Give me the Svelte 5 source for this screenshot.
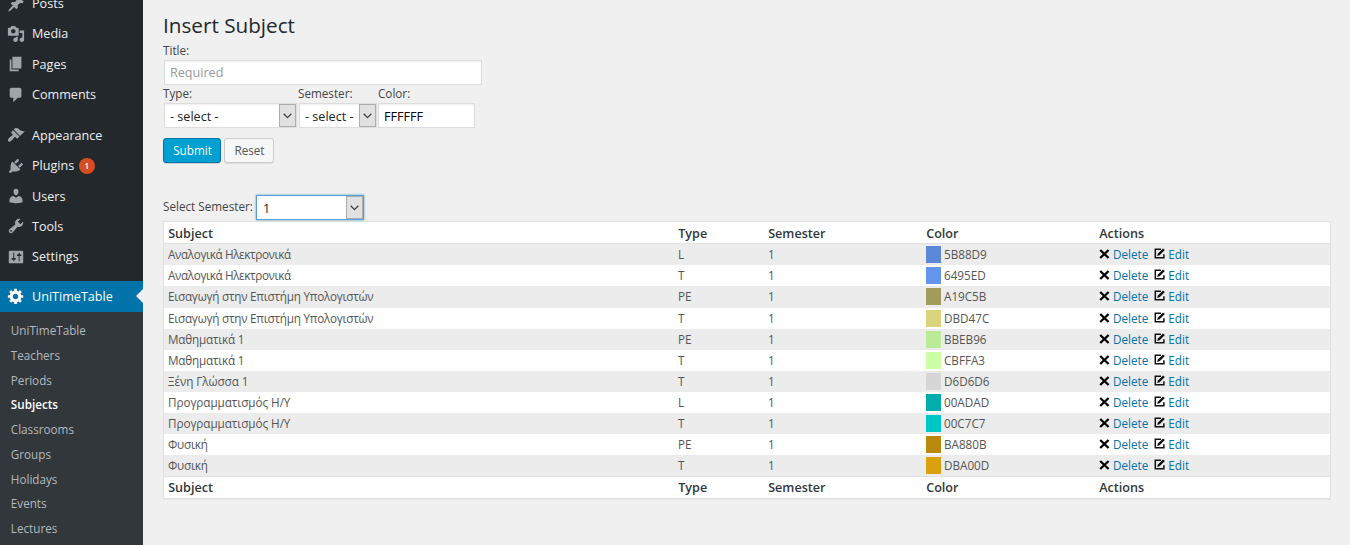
<script>
  const icons = {
    post: 'M10.44 3.02l1.82-1.82 6.36 6.35-1.83 1.82c-1.05-.68-2.48-.57-3.41.36l-.75.75c-.92.93-1.04 2.35-.35 3.41l-1.83 1.82-2.41-2.41-2.8 2.79c-.42.42-3.38 2.71-3.8 2.29s1.86-3.39 2.28-3.81l2.79-2.79L4.1 9.36l1.83-1.82c1.05.69 2.48.57 3.4-.36l.75-.75c.93-.92 1.05-2.35.36-3.41z',
    media: 'M13 11V4c0-.55-.45-1-1-1h-1.67L9 1H5L3.67 3H2c-.55 0-1 .45-1 1v7c0 .55.45 1 1 1h10c.55 0 1-.45 1-1zM7 4.5c1.38 0 2.5 1.12 2.5 2.5S8.38 9.5 7 9.5 4.5 8.38 4.5 7 5.62 4.5 7 4.5zM14 6h5v10.5c0 1.38-1.12 2.5-2.5 2.5S14 17.88 14 16.5s1.12-2.5 2.5-2.5c.17 0 .34.02.5.05V9h-3V6zm-4 8.05V13h2v3.5c0 1.38-1.12 2.5-2.5 2.5S7 17.88 7 16.5 8.12 14 9.5 14c.17 0 .34.02.5.05z',
    page: 'M6 15V2h10v13H6zm-1 1h8v2H3V5h2v11z',
    comment: 'M5 2h9c1.1 0 2 .9 2 2v7c0 1.1-.9 2-2 2h-2l-5 5v-5H5c-1.1 0-2-.9-2-2V4c0-1.1.9-2 2-2z',
    brush: 'M14.48 11.06L7.41 3.99l1.5-1.5c.5-.56 2.3-.47 3.51.32 1.21.8 1.43 1.28 2.91 2.1 1.18.64 2.45 1.26 4.45.85zm-.71.71L6.7 4.7 4.93 6.47c-.39.39-.39 1.02 0 1.41l1.06 1.06c.39.39.39 1.03 0 1.42-.6.6-1.43 1.11-2.21 1.69-.35.26-.7.53-1.01.84C1.43 14.23.4 16.08 1.4 17.07c.99 1 2.84-.03 4.18-1.36.31-.31.58-.66.85-1.02.57-.78 1.08-1.61 1.69-2.21.39-.39 1.02-.39 1.41 0l1.06 1.06c.39.39 1.02.39 1.41 0z',
    plug: 'M13.11 4.36L9.87 7.6 8 5.73l3.24-3.24c.35-.34 1.05-.2 1.56.32.52.51.66 1.21.31 1.55zm-8 1.77l.91-1.12 9.01 9.01-1.19.84c-.71.71-2.63 1.16-3.82 1.16H6.14L4.9 17.26c-.59.59-1.54.59-2.12 0-.59-.58-.59-1.53 0-2.12l1.24-1.24v-3.88c0-1.13.4-3.19 1.09-3.89zm7.26 3.97l3.24-3.24c.34-.35 1.04-.21 1.55.31.52.51.66 1.21.31 1.55l-3.24 3.25z',
    user: 'M10 9.25c-2.27 0-2.73-3.44-2.73-3.44C7 4.02 7.82 2 9.97 2c2.16 0 2.98 2.02 2.71 3.81 0 0-.41 3.44-2.68 3.44zm0 2.57L12.72 10c2.39 0 4.52 2.33 4.52 4.53v2.49s-3.65 1.13-7.24 1.13c-3.65 0-7.24-1.13-7.24-1.13v-2.49c0-2.25 1.94-4.48 4.47-4.48z',
    wrench: 'M16.68 9.77c-1.34 1.34-3.3 1.67-4.95.99l-5.41 6.52c-.99.99-2.59.99-3.58 0s-.99-2.59 0-3.57l6.52-5.42c-.68-1.65-.35-3.61.99-4.95 1.28-1.28 3.12-1.62 4.72-1.06l-2.89 2.89 2.82 2.82 2.86-2.87c.53 1.58.18 3.39-1.08 4.65zM3.81 16.21c.4.39 1.04.39 1.43 0 .4-.4.4-1.04 0-1.43-.39-.4-1.03-.4-1.43 0-.39.39-.39 1.03 0 1.43z',
    sliders: 'M18 16V4c0-.55-.45-1-1-1H3c-.55 0-1 .45-1 1v12c0 .55.45 1 1 1h14c.55 0 1-.45 1-1zM8 11h1c.55 0 1 .45 1 1s-.45 1-1 1H8v1.5c0 .28-.22.5-.5.5s-.5-.22-.5-.5V13H6c-.55 0-1-.45-1-1s.45-1 1-1h1V5.5c0-.28.22-.5.5-.5s.5.22.5.5V11zm5-2h-1c-.55 0-1-.45-1-1s.45-1 1-1h1V5.5c0-.28.22-.5.5-.5s.5.22.5.5V7h1c.55 0 1 .45 1 1s-.45 1-1 1h-1v5.5c0 .28-.22.5-.5.5s-.5-.22-.5-.5V9z',
    gear: 'M18 12h-2.18c-.17.7-.44 1.35-.81 1.93l1.54 1.54-2.1 2.1-1.54-1.54c-.58.36-1.23.63-1.91.79V19H8v-2.18c-.68-.16-1.33-.43-1.91-.79l-1.54 1.54-2.12-2.12 1.54-1.54c-.36-.58-.63-1.23-.79-1.91H1V9.03h2.17c.16-.7.44-1.35.8-1.94L2.43 5.55l2.1-2.1 1.54 1.54c.58-.37 1.24-.64 1.93-.81V2h3v2.18c.68.16 1.33.43 1.91.79l1.54-1.54 2.12 2.12-1.54 1.54c.36.59.64 1.24.8 1.94H18V12zm-8.5 1.5c1.66 0 3-1.34 3-3s-1.34-3-3-3-3 1.34-3 3 1.34 3 3 3z'
  };
  const groups = [
    [['Posts', 'post'], ['Media', 'media'], ['Pages', 'page'], ['Comments', 'comment']],
    [['Appearance', 'brush'], ['Plugins', 'plug', 1], ['Users', 'user'], ['Tools', 'wrench'], ['Settings', 'sliders']]
  ];
  const submenu = ['UniTimeTable', 'Teachers', 'Periods', 'Subjects', 'Classrooms', 'Groups', 'Holidays', 'Events', 'Lectures'];
  const heads = ['Subject', 'Type', 'Semester', 'Color', 'Actions'];
  // subject, type, colour, tracking of the subject in px
  const rows = [
    ['Αναλογικά Ηλεκτρονικά', 'L', '5B88D9', -0.35],
    ['Αναλογικά Ηλεκτρονικά', 'T', '6495ED', -0.35],
    ['Εισαγωγή στην Επιστήμη Υπολογιστών', 'PE', 'A19C5B', -0.22],
    ['Εισαγωγή στην Επιστήμη Υπολογιστών', 'T', 'DBD47C', -0.22],
    ['Μαθηματικά 1', 'PE', 'BBEB96', -0.2],
    ['Μαθηματικά 1', 'T', 'CBFFA3', -0.2],
    ['Ξένη Γλώσσα 1', 'T', 'D6D6D6', -0.05],
    ['Προγραμματισμός Η/Υ', 'L', '00ADAD', -0.05],
    ['Προγραμματισμός Η/Υ', 'T', '00C7C7', -0.05],
    ['Φυσική', 'PE', 'BA880B', -0.2],
    ['Φυσική', 'T', 'DBA00D', -0.2]
  ];
</script>

{#snippet icon(name)}
  <svg class="icon" viewBox="0 0 20 20"><path d={icons[name]} /></svg>
{/snippet}

{#snippet select(text, cls)}
  <div class="select {cls}">
    <span>{text}</span>
    <i><svg width="9" height="6" viewBox="0 0 9 6"><path d="M.7.8l3.8 3.8L8.3.8" /></svg></i>
  </div>
{/snippet}

<div class="app">
  <nav>
    {#each groups as group}
      <ul class="group">
        {#each group as [label, name, count]}
          <li>{@render icon(name)}<span>{label}</span>{#if count}<b class="badge">{count}</b>{/if}</li>
        {/each}
      </ul>
    {/each}
    <div class="current">{@render icon('gear')}<span>UniTimeTable</span></div>
    <ul class="sub">
      {#each submenu as s}
        <li class:on={s === 'Subjects'}>{s}</li>
      {/each}
    </ul>
  </nav>

  <main>
    <h2>Insert Subject</h2>
    <div class="label">Title:</div>
    <div class="field title">Required</div>
    <div class="label three"><span>Type:</span><span>Semester:</span><span>Color:</span></div>
    <div class="inputs">
      {@render select('- select -', 'type')}
      {@render select('- select -', 'sem')}
      <div class="field color">FFFFFF</div>
    </div>
    <div class="buttons">
      <button class="primary">Submit</button>
      <button>Reset</button>
    </div>
    <div class="filter">
      <span>Select Semester:</span>
      {@render select('1', 'focus')}
    </div>

    <div class="table">
      <div class="row head">{#each heads as h}<span>{h}</span>{/each}</div>
      {#each rows as [subject, type, color, tracking]}
        <div class="row">
          <span style="letter-spacing:{tracking}px">{subject}</span>
          <span>{type}</span>
          <span>1</span>
          <span class="hex"><i class="swatch" style="background:#{color}"></i>{color}</span>
          <span class="actions">
            <svg class="x" width="11" height="10" viewBox="0 0 11 10"><path d="M1.2 1l8.4 8M9.6 1L1.2 9" /></svg>
            <a class="del">Delete</a>
            <svg class="pen" width="12" height="11" viewBox="0 0 12 11"><path class="box" d="M7 1.3H1.3v8.4h8.6V6.2" /><path class="nib" d="M3.2 8l.5-2.3L9 .4l1.9 1.7-5.3 5.2z" /></svg>
            <a>Edit</a>
          </span>
        </div>
      {/each}
      <div class="row foot">{#each heads as h}<span>{h}</span>{/each}</div>
    </div>
  </main>
</div>

<style>
  :global(body) { background: #f0f0f0; overflow: hidden; }
  .app {
    display: flex;
    height: 545px;
    overflow: hidden;
    background: #f0f0f0;
    color: #444;
    font: 11.7px/16px 'Open Sans', sans-serif;
  }
  ul { list-style: none; margin: 0; padding: 0; }
  nav {
    flex: none;
    width: 143px;
    height: 557px;
    margin-top: -11px;
    background: #23282d;
    color: #eee;
    font-size: 12.6px;
  }
  .group { margin-bottom: 10.6px; }
  .group + .group { margin-bottom: 8.7px; }
  .group li, .current { display: flex; align-items: center; height: 30.3px; padding-left: 7px; }
  .icon { width: 18px; height: 18px; margin: -1px 7px 0 0; fill: #a0a5aa; flex: none; }
  .badge {
    width: 16px; height: 16px; margin-left: 4.5px; border-radius: 8px;
    background: #d54e21; color: #fff; font-size: 8.1px; font-weight: 600; text-align: center;
  }
  .current { position: relative; height: 31px; background: #0073aa; color: #fff; }
  .current span { padding-top: 2px; }
  .current .icon { fill: #fff; margin-top: 0; }
  .current::after {
    content: ''; position: absolute; right: 0; top: 8.5px;
    border: 7px solid transparent; border-right-color: #f0f0f0; border-left: 0;
  }
  .sub { height: 240px; padding: 6.2px 0 0 10.8px; background: #32373c; color: #b4b9be; font-size: 11.7px; }
  .sub li { height: 24.75px; line-height: 24.75px; }
  .sub .on { color: #fff; font-weight: 600; }

  main { flex: 1; padding: 12px 19px 0 20px; }
  h2 { margin: 0; height: 30px; font-size: 20.7px; line-height: 26px; font-weight: 400; color: #23282d; }
  .label { height: 18px; }
  .three { display: grid; grid-template-columns: 135px 80px 80px; }
  .field, .select {
    box-sizing: border-box; height: 25px; border: 1px solid #ddd; background: #fff;
    box-shadow: inset 0 1px 2px rgba(0, 0, 0, 0.07); color: #000; font-size: 12.6px; line-height: 24px; padding-left: 5px;
  }
  .title { width: 318px; margin-left: 1px; color: #999; }
  .inputs { display: flex; margin-left: 1px; }
  .inputs .field, .inputs :global(.select > span) { line-height: 26px; }
  .select { display: flex; justify-content: space-between; color: #222; }
  .select i {
    display: flex; align-items: center; justify-content: center; box-sizing: border-box;
    width: 17px; height: 23px; border: 1px solid #adadad; background: #e1e1e1;
  }
  .select path { fill: none; stroke: #444; stroke-width: 1.3; }
  .type { width: 133px; margin-right: 2px; }
  .sem { width: 78px; margin-right: 1px; }
  .color { width: 97px; }
  .buttons { display: flex; gap: 3px; margin-top: 10px; }
  button {
    box-sizing: border-box; width: 50px; height: 25px; padding: 0 0 1px 1px; border: 1px solid #ccc; border-radius: 3px;
    background: #f7f7f7; box-shadow: 0 1px 0 #ddd; color: #555; font: 11.7px/22px 'Open Sans', sans-serif;
  }
  .primary { width: 58px; background: #00a0d2; border-color: #0073aa; color: #fff; box-shadow: 0 1px 0 rgba(0, 0, 0, 0.12); }
  .filter { display: flex; height: 26px; margin-top: 32px; line-height: 23px; gap: 4px; }
  .filter > span { width: 89px; white-space: nowrap; }
  .filter :global(.focus) { width: 108px; line-height: 25px; padding-left: 6px; border-color: #5b9dd9; box-shadow: 0 0 2px rgba(30, 140, 190, 0.8); }
  .table { border: 1px solid #e1e1e1; background: #fff; box-shadow: 0 1px 1px rgba(0, 0, 0, 0.04); }
  .row {
    display: grid; grid-template-columns: 510px 90px 158px 173px 1fr; box-sizing: border-box;
    height: 21px; padding-left: 4px; line-height: 20px; color: #555; white-space: nowrap;
  }
  .row:nth-child(even) { background: #ececec; }
  .row:nth-child(4) { height: 22px; }
  .head, .row.foot { height: 22px; padding-left: 4.2px; font-size: 12.6px; font-weight: 600; line-height: 23px; color: #32373c; background: #fff; }
  .head { border-bottom: 1px solid #e1e1e1; }
  .row.foot { border-top: 1px solid #e1e1e1; line-height: 22px; }
  .hex { display: flex; }
  .swatch { width: 15px; height: 17px; margin: 2px 3px 0 0; }
  .actions { display: flex; }
  .actions svg { margin-top: 5px; }
  .x { margin-right: 3px; }
  .x path { stroke: #000; stroke-width: 2.3; }
  .actions .pen { margin: 4px 2.5px 0 5.5px; }
  .box { fill: none; stroke: #111; stroke-width: 1.5; }
  .nib { fill: #111; }
  a { color: #0073aa; }
</style>
